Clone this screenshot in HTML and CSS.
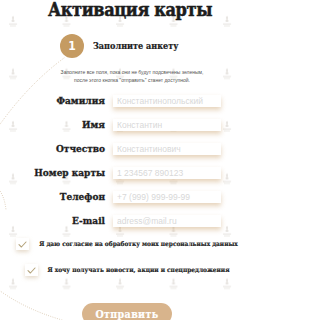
FILE: index.html
```html
<!DOCTYPE html>
<html lang="ru">
<head>
<meta charset="utf-8">
<title>Активация карты</title>
<link rel="stylesheet" href="styles.css">
</head>
<body>
<div class="page">
  <svg class="decor" width="260" height="320" viewBox="0 0 260 320" aria-hidden="true">
    <defs>
      <pattern id="logos" x="7" y="15" width="53.5" height="52.5" patternUnits="userSpaceOnUse">
        <g fill="#e6e3df">
          <path d="M6 0.5 L7 2.5 L6.6 5 L8 6 L6.5 7 L5.5 7 L4 6 L5.4 5 L5 2.5 Z"/>
          <rect x="2" y="8.5" width="8" height="1"/>
          <rect x="3" y="10.5" width="6" height="0.8"/>
        </g>
      </pattern>
    </defs>
    <rect width="260" height="320" fill="url(#logos)"/>
    <g fill="none" stroke="#d8c6ae" stroke-width="0.9" stroke-linecap="round" stroke-dasharray="0.1 2.2">
      <path d="M64 58 C45 72 20 95 -4 130"/>
      <path d="M-4 186 C2 192 5 200 6 210"/>
      <path d="M-4 288 C15 302 35 312 62 320"/>
    </g>
  </svg>

  <main class="content">
    <h1 class="title">Активация карты</h1>

    <div class="step">
      <span class="step-num">1</span>
      <span class="step-title">Заполните анкету</span>
    </div>

    <p class="hint">Заполните все поля, пока они не будут подсвечены зеленым,<br>после этого кнопка "отправить" станет доступной.</p>

    <form class="form">
      <label class="row"><span class="label">Фамилия</span><input class="field" type="text" placeholder="Константинопольский"></label>
      <label class="row"><span class="label">Имя</span><input class="field" type="text" placeholder="Константин"></label>
      <label class="row"><span class="label">Отчество</span><input class="field" type="text" placeholder="Константинович"></label>
      <label class="row"><span class="label">Номер карты</span><input class="field" type="text" placeholder="1 234567 890123"></label>
      <label class="row"><span class="label">Телефон</span><input class="field" type="text" placeholder="+7 (999) 999-99-99"></label>
      <label class="row"><span class="label">E-mail</span><input class="field" type="text" placeholder="adress@mail.ru"></label>

      <div class="agree">
        <label class="check">
          <span class="box"><svg width="9" height="7" viewBox="0 0 9 7"><path d="M1 3.6 L3.4 6 L8 1" fill="none" stroke="#b3a27a" stroke-width="1.1" stroke-linecap="round" stroke-linejoin="round"/></svg></span>
          <span class="check-text">Я даю согласие на обработку моих персональных данных</span>
        </label>
        <label class="check">
          <span class="box"><svg width="9" height="7" viewBox="0 0 9 7"><path d="M1 3.6 L3.4 6 L8 1" fill="none" stroke="#b3a27a" stroke-width="1.1" stroke-linecap="round" stroke-linejoin="round"/></svg></span>
          <span class="check-text">Я хочу получать новости, акции и спецпредложения</span>
        </label>
      </div>

      <div class="actions">
        <button class="submit" type="button">Отправить</button>
      </div>
    </form>
  </main>
</div>
</body>
</html>
```

FILE: styles.css
```css
* { box-sizing: border-box; }

html, body {
  margin: 0;
  padding: 0;
  background: #ffffff;
}

.page {
  position: relative;
  width: 260px;
  height: 320px;
  overflow: hidden;
  font-family: "DejaVu Serif Condensed", "DejaVu Serif", serif;
  font-stretch: condensed;
  color: #1e1e1e;
}

.decor {
  position: absolute;
  left: 0;
  top: 0;
}

.content {
  position: relative;
  display: flex;
  flex-direction: column;
}

.title {
  margin: 0;
  padding-top: 1px;
  font-size: 18px;
  line-height: 18px;
  font-weight: 700;
  letter-spacing: -0.4px;
  text-align: center;
  color: #1c1c1c;
  -webkit-text-stroke: 0.5px #1c1c1c;
}

.step {
  display: flex;
  align-items: center;
  gap: 9px;
  margin-top: 15px;
  padding-left: 60px;
}

.step-num {
  width: 24px;
  height: 24px;
  border-radius: 50%;
  background: #c59b62;
  color: #ffffff;
  font-family: "DejaVu Sans", sans-serif;
  font-weight: 700;
  font-size: 12px;
  display: flex;
  align-items: center;
  justify-content: center;
}

.step-title {
  font-size: 9px;
  font-weight: 700;
  color: #222222;
  -webkit-text-stroke: 0.2px #222222;
}

.hint {
  margin: 10px 0 0;
  font-family: "Liberation Sans", sans-serif;
  font-size: 5px;
  line-height: 8px;
  color: #555555;
  text-align: center;
  padding-left: 4px;
}

.form {
  display: flex;
  flex-direction: column;
  margin-top: 11px;
}

.row {
  display: grid;
  grid-template-columns: 105px 108px;
  column-gap: 8px;
  align-items: center;
  height: 12px;
  margin-bottom: 12px;
}

.label {
  text-align: right;
  font-size: 10px;
  font-weight: 700;
  line-height: 12px;
  color: #1e1e1e;
  -webkit-text-stroke: 0.3px #1e1e1e;
}

.field {
  height: 12px;
  width: 108px;
  border: none;
  outline: none;
  background: #ffffff;
  padding: 0 4px;
  font-family: "Liberation Sans", sans-serif;
  font-size: 8.5px;
  color: #333;
  box-shadow: 0 3px 5px rgba(200, 158, 104, 0.45);
}

.field::placeholder {
  color: #d8d8d8;
}

.agree {
  display: flex;
  flex-direction: column;
  gap: 14px;
  margin-top: -1px;
  padding-right: 6px;
}

.check {
  display: flex;
  align-items: center;
  justify-content: center;
  gap: 10px;
}

.box {
  width: 13px;
  height: 12px;
  background: #ffffff;
  box-shadow: 0 2px 4px rgba(190, 160, 120, 0.4);
  display: flex;
  align-items: center;
  justify-content: center;
}

.check-text {
  font-size: 6.5px;
  font-weight: 700;
  color: #222222;
  -webkit-text-stroke: 0.15px #222222;
}

.actions {
  display: flex;
  justify-content: center;
  margin-top: 27px;
  padding-right: 6px;
}

.submit {
  width: 90px;
  height: 22px;
  border: none;
  border-radius: 11px;
  background: #d8b48c;
  color: #ffffff;
  font-family: "DejaVu Serif Condensed", "DejaVu Serif", serif;
  font-stretch: condensed;
  font-weight: 700;
  font-size: 10.5px;
  letter-spacing: 0.4px;
  padding: 0;
  -webkit-text-stroke: 0.2px #ffffff;
}
```
